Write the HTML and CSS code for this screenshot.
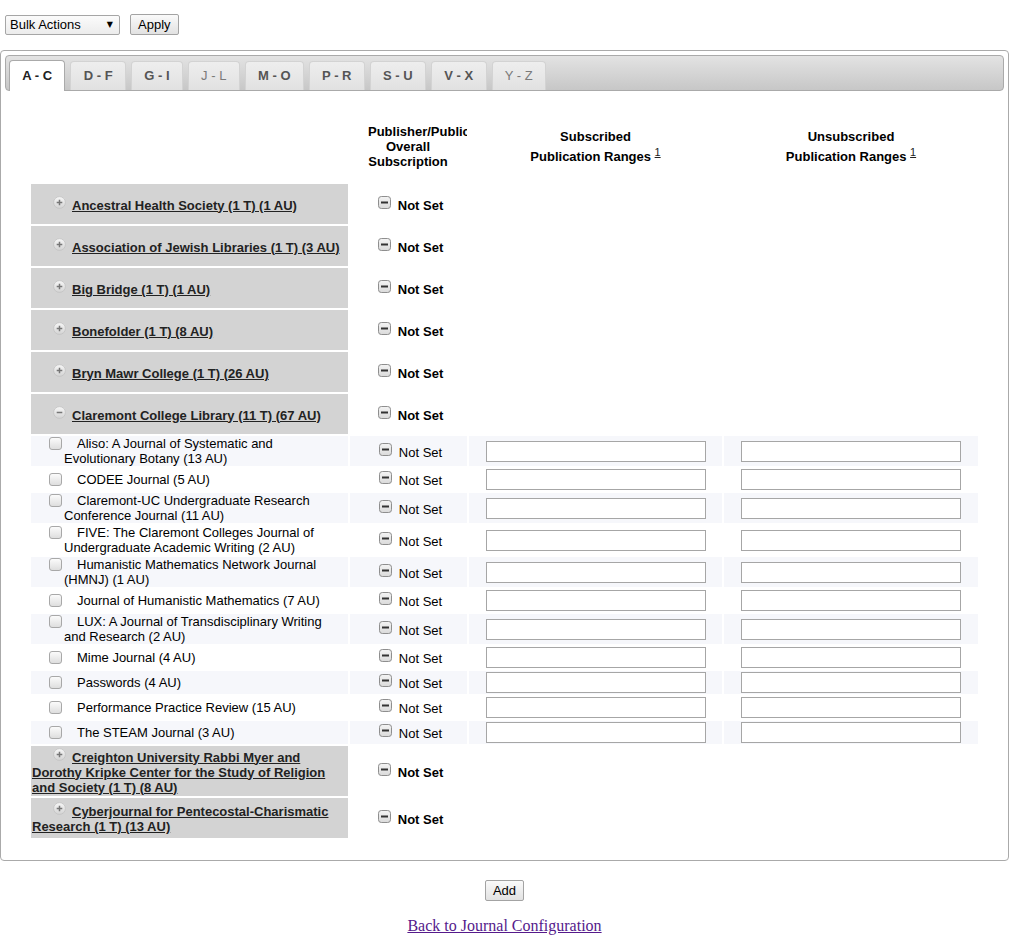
FILE: index.html
```html
<!DOCTYPE html>
<html>
<head>
<meta charset="utf-8">
<title>Journal Configuration</title>
<link rel="stylesheet" href="styles.css">
</head>
<body>
<svg class="defs" width="0" height="0" aria-hidden="true">
  <defs>
    <linearGradient id="gcirc" x1="0" y1="0" x2="0" y2="1">
      <stop offset="0" stop-color="#f7f7f7"/>
      <stop offset="1" stop-color="#d3d3d3"/>
    </linearGradient>
    <linearGradient id="gsq" x1="0" y1="0" x2="0" y2="1">
      <stop offset="0" stop-color="#f4f4f4"/>
      <stop offset="1" stop-color="#dadada"/>
    </linearGradient>
    <symbol id="i-plus" viewBox="0 0 13 13">
      <circle cx="6.5" cy="6.5" r="5.9" fill="url(#gcirc)" stroke="#c2c2c2" stroke-width="0.8"/>
      <path d="M3.7 6.5h5.6M6.5 3.7v5.6" stroke="#767676" stroke-width="1.5"/>
    </symbol>
    <symbol id="i-minus" viewBox="0 0 13 13">
      <circle cx="6.5" cy="6.5" r="5.9" fill="url(#gcirc)" stroke="#c2c2c2" stroke-width="0.8"/>
      <path d="M3.7 6.5h5.6" stroke="#767676" stroke-width="1.5"/>
    </symbol>
    <symbol id="i-ns" viewBox="0 0 13 13">
      <rect x="0.5" y="0.5" width="12" height="12" rx="2.8" fill="url(#gsq)" stroke="#8e8e8e"/>
      <rect x="3" y="5.5" width="7" height="2" fill="#333"/>
    </symbol>
  </defs>
</svg>

<div class="page">
  <div class="topbar">
    <span class="selwrap"><select class="bulk"><option>Bulk Actions</option></select></span>
    <button class="btn" type="button">Apply</button>
  </div>

  <div class="tabs">
    <ul class="nav">
      <li class="tab active"><a href="#">A - C</a></li>
      <li class="tab"><a href="#">D - F</a></li>
      <li class="tab"><a href="#">G - I</a></li>
      <li class="tab disabled"><a href="#">J - L</a></li>
      <li class="tab"><a href="#">M - O</a></li>
      <li class="tab"><a href="#">P - R</a></li>
      <li class="tab"><a href="#">S - U</a></li>
      <li class="tab"><a href="#">V - X</a></li>
      <li class="tab disabled"><a href="#">Y - Z</a></li>
    </ul>

    <div class="panel">
      <table class="grid">
        <colgroup><col class="c1"><col class="c2"><col class="c3"><col class="c4"></colgroup>
        <tr class="head">
          <td></td>
          <td class="hpub"><div class="pub">Publisher/Publication<br>Overall<br>Subscription</div></td>
          <td class="hrng">Subscribed<br>Publication Ranges <sup><a href="#">1</a></sup></td>
          <td class="hrng">Unsubscribed<br>Publication Ranges <sup><a href="#">1</a></sup></td>
        </tr>

        <tr class="grp">
          <td class="gname"><svg class="pm"><use href="#i-plus"/></svg><a href="#">Ancestral Health Society (1 T) (1 AU)</a></td>
          <td class="stat"><svg class="ns"><use href="#i-ns"/></svg><b>Not Set</b></td><td></td><td></td>
        </tr>
        <tr class="grp">
          <td class="gname"><svg class="pm"><use href="#i-plus"/></svg><a href="#">Association of Jewish Libraries (1 T) (3 AU)</a></td>
          <td class="stat"><svg class="ns"><use href="#i-ns"/></svg><b>Not Set</b></td><td></td><td></td>
        </tr>
        <tr class="grp">
          <td class="gname"><svg class="pm"><use href="#i-plus"/></svg><a href="#">Big Bridge (1 T) (1 AU)</a></td>
          <td class="stat"><svg class="ns"><use href="#i-ns"/></svg><b>Not Set</b></td><td></td><td></td>
        </tr>
        <tr class="grp">
          <td class="gname"><svg class="pm"><use href="#i-plus"/></svg><a href="#">Bonefolder (1 T) (8 AU)</a></td>
          <td class="stat"><svg class="ns"><use href="#i-ns"/></svg><b>Not Set</b></td><td></td><td></td>
        </tr>
        <tr class="grp">
          <td class="gname"><svg class="pm"><use href="#i-plus"/></svg><a href="#">Bryn Mawr College (1 T) (26 AU)</a></td>
          <td class="stat"><svg class="ns"><use href="#i-ns"/></svg><b>Not Set</b></td><td></td><td></td>
        </tr>
        <tr class="grp">
          <td class="gname"><svg class="pm"><use href="#i-minus"/></svg><a href="#">Claremont College Library (11 T) (67 AU)</a></td>
          <td class="stat"><svg class="ns"><use href="#i-ns"/></svg><b>Not Set</b></td><td></td><td></td>
        </tr>

        <tr class="jr alt">
          <td class="jname"><input type="checkbox" class="cb">Aliso: A Journal of Systematic and Evolutionary Botany (13 AU)</td>
          <td class="stat"><svg class="ns"><use href="#i-ns"/></svg>Not Set</td>
          <td class="rng"><input type="text" class="tx"></td><td class="rng"><input type="text" class="tx"></td>
        </tr>
        <tr class="jr">
          <td class="jname"><input type="checkbox" class="cb">CODEE Journal (5 AU)</td>
          <td class="stat"><svg class="ns"><use href="#i-ns"/></svg>Not Set</td>
          <td class="rng"><input type="text" class="tx"></td><td class="rng"><input type="text" class="tx"></td>
        </tr>
        <tr class="jr alt">
          <td class="jname"><input type="checkbox" class="cb">Claremont-UC Undergraduate Research Conference Journal (11 AU)</td>
          <td class="stat"><svg class="ns"><use href="#i-ns"/></svg>Not Set</td>
          <td class="rng"><input type="text" class="tx"></td><td class="rng"><input type="text" class="tx"></td>
        </tr>
        <tr class="jr">
          <td class="jname"><input type="checkbox" class="cb">FIVE: The Claremont Colleges Journal of Undergraduate Academic Writing (2 AU)</td>
          <td class="stat"><svg class="ns"><use href="#i-ns"/></svg>Not Set</td>
          <td class="rng"><input type="text" class="tx"></td><td class="rng"><input type="text" class="tx"></td>
        </tr>
        <tr class="jr alt">
          <td class="jname"><input type="checkbox" class="cb">Humanistic Mathematics Network Journal (HMNJ) (1 AU)</td>
          <td class="stat"><svg class="ns"><use href="#i-ns"/></svg>Not Set</td>
          <td class="rng"><input type="text" class="tx"></td><td class="rng"><input type="text" class="tx"></td>
        </tr>
        <tr class="jr">
          <td class="jname"><input type="checkbox" class="cb">Journal of Humanistic Mathematics (7 AU)</td>
          <td class="stat"><svg class="ns"><use href="#i-ns"/></svg>Not Set</td>
          <td class="rng"><input type="text" class="tx"></td><td class="rng"><input type="text" class="tx"></td>
        </tr>
        <tr class="jr alt">
          <td class="jname"><input type="checkbox" class="cb">LUX: A Journal of Transdisciplinary Writing and Research (2 AU)</td>
          <td class="stat"><svg class="ns"><use href="#i-ns"/></svg>Not Set</td>
          <td class="rng"><input type="text" class="tx"></td><td class="rng"><input type="text" class="tx"></td>
        </tr>
        <tr class="jr">
          <td class="jname"><input type="checkbox" class="cb">Mime Journal (4 AU)</td>
          <td class="stat"><svg class="ns"><use href="#i-ns"/></svg>Not Set</td>
          <td class="rng"><input type="text" class="tx"></td><td class="rng"><input type="text" class="tx"></td>
        </tr>
        <tr class="jr alt">
          <td class="jname"><input type="checkbox" class="cb">Passwords (4 AU)</td>
          <td class="stat"><svg class="ns"><use href="#i-ns"/></svg>Not Set</td>
          <td class="rng"><input type="text" class="tx"></td><td class="rng"><input type="text" class="tx"></td>
        </tr>
        <tr class="jr">
          <td class="jname"><input type="checkbox" class="cb">Performance Practice Review (15 AU)</td>
          <td class="stat"><svg class="ns"><use href="#i-ns"/></svg>Not Set</td>
          <td class="rng"><input type="text" class="tx"></td><td class="rng"><input type="text" class="tx"></td>
        </tr>
        <tr class="jr alt">
          <td class="jname"><input type="checkbox" class="cb">The STEAM Journal (3 AU)</td>
          <td class="stat"><svg class="ns"><use href="#i-ns"/></svg>Not Set</td>
          <td class="rng"><input type="text" class="tx"></td><td class="rng"><input type="text" class="tx"></td>
        </tr>

        <tr class="grp">
          <td class="gname"><svg class="pm"><use href="#i-plus"/></svg><a href="#">Creighton University Rabbi Myer and Dorothy Kripke Center for the Study of Religion and Society (1 T) (8 AU)</a></td>
          <td class="stat"><svg class="ns"><use href="#i-ns"/></svg><b>Not Set</b></td><td></td><td></td>
        </tr>
        <tr class="grp">
          <td class="gname"><svg class="pm"><use href="#i-plus"/></svg><a href="#">Cyberjournal for Pentecostal-Charismatic Research (1 T) (13 AU)</a></td>
          <td class="stat"><svg class="ns"><use href="#i-ns"/></svg><b>Not Set</b></td><td></td><td></td>
        </tr>
      </table>
    </div>
  </div>

  <div class="foot">
    <button class="btn" type="button">Add</button>
  </div>
  <div class="back"><a href="#">Back to Journal Configuration</a></div>
</div>
</body>
</html>
```

FILE: styles.css
```css
* { box-sizing: border-box; }
html, body { margin: 0; padding: 0; background: #fff; }
body {
  font-family: "Liberation Sans", Arial, sans-serif;
  font-size: 13px;
  color: #000;
}
.defs { position: absolute; width: 0; height: 0; overflow: hidden; }

.page { width: 1009px; }

/* top bar */
.topbar {
  display: flex;
  align-items: center;
  gap: 10px;
  height: 35px;
  padding: 14px 0 0 5px;
}
.selwrap { position: relative; display: inline-block; }
.bulk {
  -webkit-appearance: none;
  appearance: none;
  display: block;
  width: 115px;
  height: 20px;
  margin: 0;
  padding: 0 0 0 4px;
  border: 1px solid #a6a6a6;
  border-radius: 2px;
  background: linear-gradient(#fbfbfb, #ececec);
  font: 13px "Liberation Sans", Arial, sans-serif;
  color: #000;
}
.selwrap::after {
  content: "\25BC";
  position: absolute;
  right: 7px;
  top: 6px;
  font-family: "DejaVu Sans", sans-serif;
  font-size: 8px;
  line-height: 8px;
  color: #000;
  pointer-events: none;
}
.btn {
  font: 13px "Liberation Sans", Arial, sans-serif;
  height: 21px;
  margin: 0;
  padding: 0 7px;
  border: 1px solid #a3a3a3;
  border-radius: 2px;
  background: linear-gradient(#fafafa, #e2e2e2);
  color: #000;
}

/* tabs container */
.tabs {
  margin-top: 15px;
  width: 1009px;
  border: 1px solid #aaa;
  border-radius: 4px;
  padding: 4px 4px 0;
  background: #fff;
}
.nav {
  list-style: none;
  margin: 0;
  padding: 4px 3px 0;
  height: 36px;
  border: 1px solid #aaa;
  border-radius: 4px;
  background: linear-gradient(#e3e3e3, #c7c7c7);
  display: flex;
  align-items: flex-end;
}
.tab {
  margin: 0 5px 0 0;
  border: 1px solid #d3d3d3;
  border-bottom: 0;
  border-radius: 4px 4px 0 0;
  background: linear-gradient(#eeeeee, #e1e1e1);
}
.tab a {
  display: block;
  padding: 0 12.3px;
  line-height: 28px;
  font-weight: bold;
  color: #555;
  text-decoration: none;
  white-space: nowrap;
}
.tab.active {
  background: #fff;
  border-color: #aaa;
  margin-bottom: -1px;
}
.tab.active a { line-height: 30px; color: #212121; }
.tab.disabled a { font-weight: normal; color: #7a7a7a; }

.panel { padding: 19px 0 20px; }

/* table */
.grid {
  table-layout: fixed;
  width: 951px;
  margin: 0 auto;
  border-collapse: separate;
  border-spacing: 2px;
}
.c1 { width: 317px; }
.c2 { width: 117px; }
.c3 { width: 253px; }
.c4 { width: 254px; }
.grid td { padding: 0; vertical-align: middle; line-height: 15px; }

.head td { height: 70px; padding-bottom: 2px; font-weight: bold; }
.grid .head td.hrng { padding-bottom: 0; }
.hpub { overflow: hidden; }
.pub {
  width: 117px;
  padding: 0 19px 0 18px;
  overflow: hidden;
  white-space: nowrap;
  text-align: center;
}
.grid td.hrng { text-align: center; line-height: 20px; }
.hrng sup { line-height: 0; }
.hrng sup a { color: #222; font-weight: normal; }

.grp { height: 40px; }
.grid td.gname {
  background: #d3d3d3;
  padding: 1.5px 1px;
  text-indent: 21px;
}
.gname a { color: #222; font-weight: bold; text-decoration: underline; }
.pm {
  width: 13px;
  height: 13px;
  margin-right: 6px;
  vertical-align: 1px;
}

.grid td.stat {
  text-align: center;
  padding-left: 4px;
  white-space: nowrap;
}
.ns { width: 13px; height: 13px; margin-right: 7px; vertical-align: 0.5px; }

.alt td { background: #f6f7fb; }
.grid td.jname {
  padding: 0 4px 0 33px;
  text-indent: -15px;
}
.cb {
  -webkit-appearance: none;
  appearance: none;
  width: 13px;
  height: 13px;
  margin: 0 15px 0 0;
  border: 1px solid #a8a8a8;
  border-radius: 3px;
  background: linear-gradient(#fbfbfb, #dedede);
  vertical-align: -2px;
}
.grid td.rng { padding: 1px 0; text-align: center; }
.tx {
  display: block;
  width: 220px;
  height: 21px;
  margin: 0 auto;
  padding: 0 2px;
  border: 1px solid #a6a6a6;
  background: #fff;
  font: 13px "Liberation Sans", Arial, sans-serif;
}

/* footer */
.foot { text-align: center; padding-top: 19px; }
.back {
  margin-top: 16px;
  text-align: center;
  font-family: "Liberation Serif", "Times New Roman", serif;
  font-size: 16px;
  line-height: 18px;
}
.back a { color: #551a8b; text-decoration: underline; }
```
